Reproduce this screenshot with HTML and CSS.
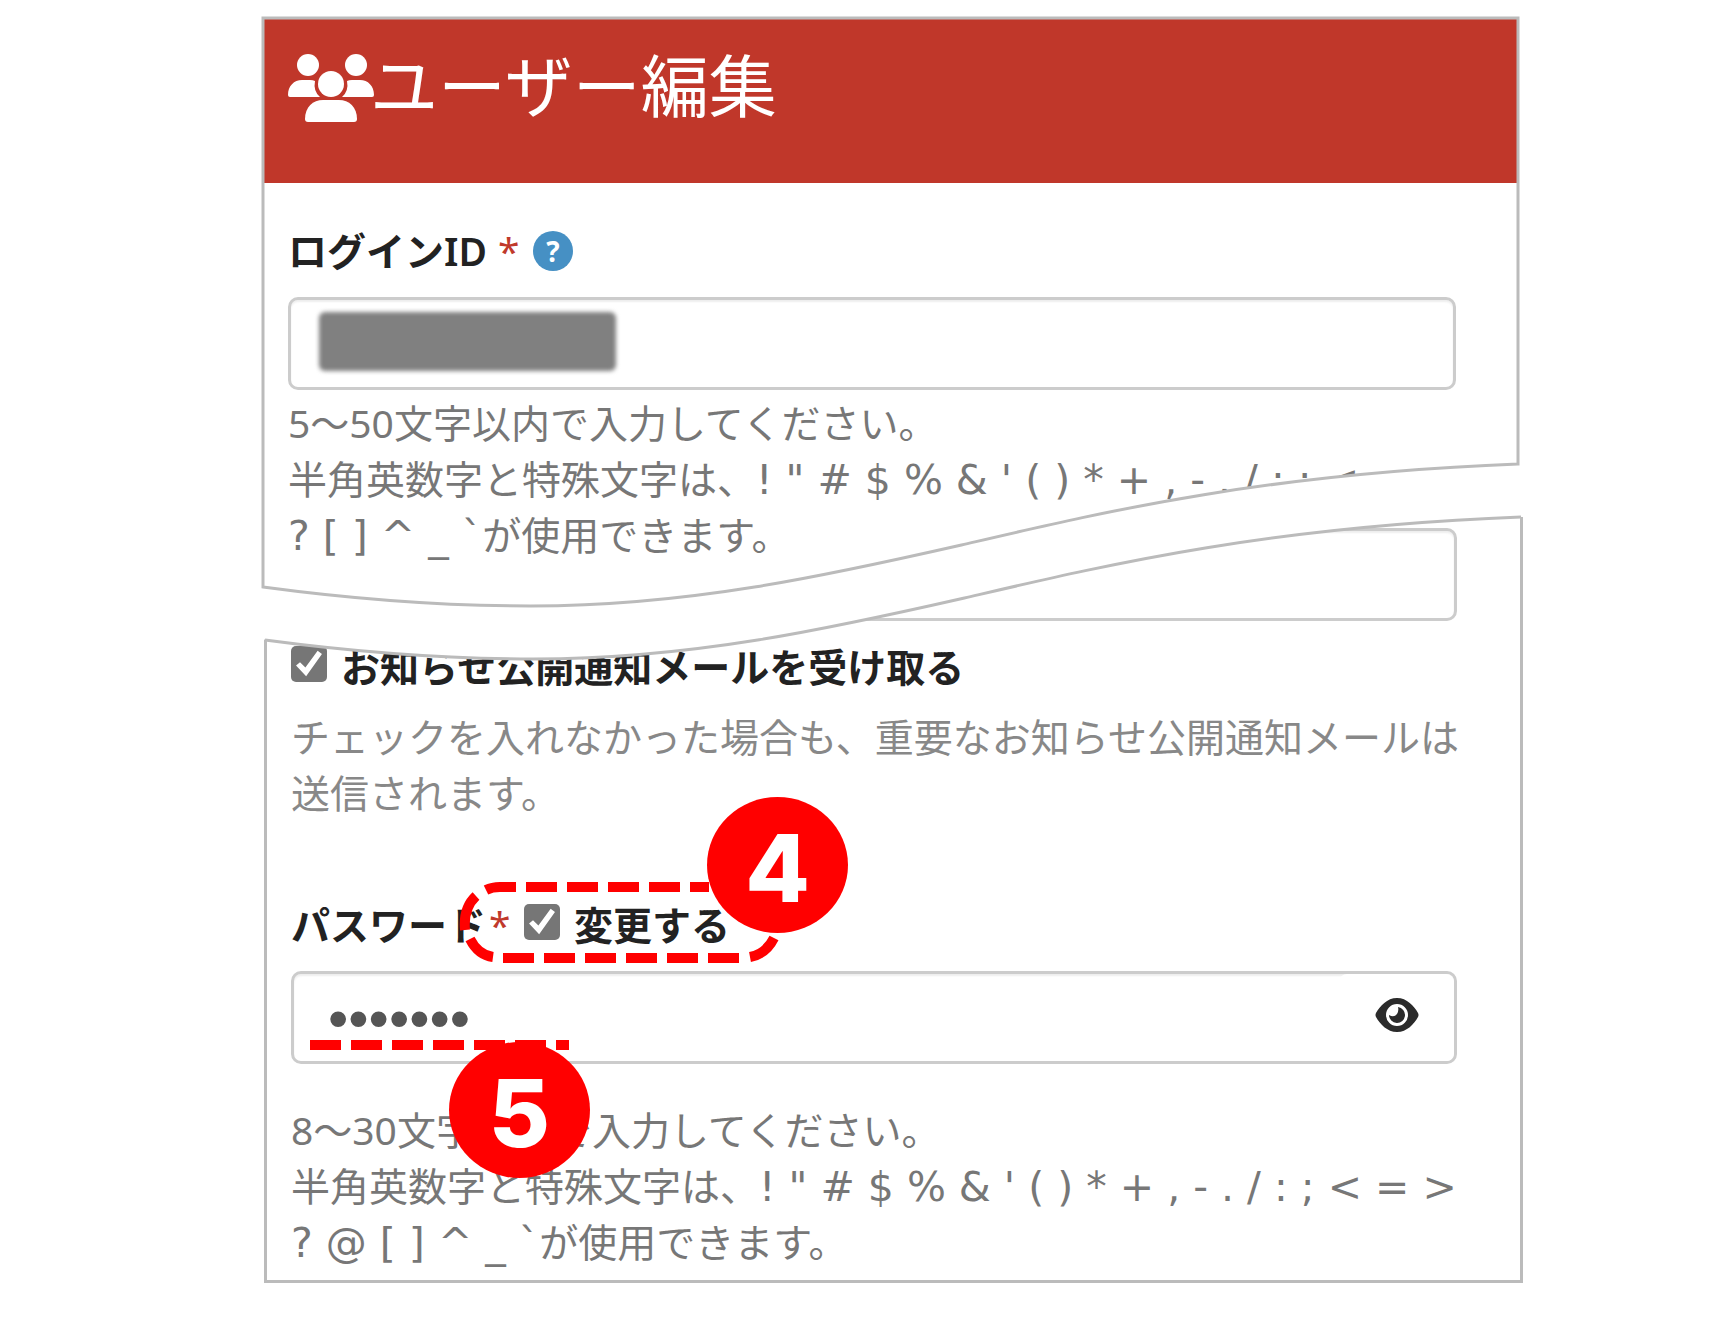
FILE: index.html
```html
<!DOCTYPE html>
<html lang="ja">
<head>
<meta charset="utf-8">
<meta name="viewport" content="width=device-width, initial-scale=1">
<title>ユーザー編集</title>
<link rel="stylesheet" href="styles.css">
</head>
<body>
<main class="figure">
  <section class="sheet sheet-top">
    <svg class="frame frame-back" viewBox="0 0 1260 644" preserveAspectRatio="none" aria-hidden="true">
      <path fill="#fff" d="M0 0H1260V500C1001 510 841 549 703 581C571 611 431 642 272 642C183 642 90 635 0 622Z"/>
    </svg>
    <header class="page-header">
      <svg class="users-icon" viewBox="0 0 86 68" aria-hidden="true">
        <g fill="#fff">
          <circle cx="20" cy="11" r="11"/>
          <circle cx="68" cy="11" r="11"/>
          <circle cx="43" cy="30" r="13"/>
          <path d="M0 41C0 32 6 26 14 26H22Q25 26 27 27Q25 37 32 43H2Q0 43 0 41Z"/>
          <path d="M86 41C86 32 80 26 72 26H64Q61 26 59 27Q61 37 54 43H84Q86 43 86 41Z"/>
          <path d="M17 65C17 53 25 46 35 46H51C61 46 69 53 69 65Q69 68 66 68H20Q17 68 17 65Z"/>
        </g>
      </svg>
      <h1 class="page-title">ユーザー編集</h1>
    </header>
    <div class="fields">
      <div class="row row-login">
        <label class="label" for="login">ログインID</label>
        <span class="required">*</span>
        <button class="help-button" type="button" aria-label="ヘルプ">?</button>
      </div>
      <div class="control">
        <input class="text-box" id="login" type="text">
        <span class="redaction"></span>
      </div>
      <p class="note">5～50文字以内で入力してください。<br>半角英数字と特殊文字は、<span class="symbols">! " # $ % &amp; ' ( ) * + , - . / : ; &lt; = &gt;</span><br><span class="symbols">? [ ] ^ _ `</span>が使用できます。</p>
    </div>
    <svg class="frame" viewBox="0 0 1260 644" preserveAspectRatio="none" aria-hidden="true">
      <path fill="#fff" d="M0 570C90 582 180 589 269 589C428 589 568 558 700 528C838 496 998 457 1260 447V500C1001 510 841 549 703 581C571 611 431 642 272 642C183 642 90 635 0 622Z"/>
      <g class="frame-line">
        <path d="M1 570V1H1257V447C998 457 838 496 700 528C568 558 428 589 269 589C180 589 90 582 1 570Z"/>
        <path d="M3 623C93 635 183 642 272 642C431 642 571 611 703 581C841 549 1001 510 1260 500"/>
      </g>
    </svg>
  </section>

  <section class="sheet sheet-bottom">
    <input class="text-box" type="email" aria-label="メールアドレス">
    <div class="row row-notice">
      <input class="tick" id="notice" type="checkbox" checked>
      <label class="label label-tick" for="notice">お知らせ公開通知メールを受け取る</label>
    </div>
    <p class="note note-notice">チェックを入れなかった場合も、重要なお知らせ公開通知メールは<br>送信されます。</p>
    <div class="row row-password">
      <label class="label" for="password">パスワード</label>
      <span class="required">*</span>
      <input class="tick" id="change" type="checkbox" checked>
      <label class="label label-tick" for="change">変更する</label>
      <svg class="callout callout-change" width="330" height="86" viewBox="0 0 330 86" aria-hidden="true">
        <path class="dashes" d="M67 5H250"/>
        <path class="dashes" d="M44 76H284"/>
        <path d="M57 5H41Q33 5 27 8"/>
        <path d="M17 14Q4 26 6 48"/>
        <path d="M11 57Q19 73 34 75"/>
        <path d="M291 75Q307 72 315 56"/>
      </svg>
      <span class="badge badge-change">4</span>
    </div>
    <div class="control">
      <input class="text-box password-box" id="password" type="password" value="passwor">
      <button class="eye-button" type="button" aria-label="パスワードを表示">
        <svg width="44" height="34" viewBox="0 0 44 34" aria-hidden="true">
          <path fill="#2b2b2b" fill-rule="evenodd" d="M22 0C32 0 39 8 43 15Q44 17 43 19C39 26 32 34 22 34S5 26 1 19Q0 17 1 15C5 8 12 0 22 0ZM22 6A11 11 0 1 0 22 28A11 11 0 1 0 22 6Z"/>
          <path fill="#2b2b2b" d="M23 9A8 8 0 1 1 14 17Q19 20 22 16Q24 13 23 9Z"/>
        </svg>
      </button>
      <svg class="callout callout-password" width="260" height="10" viewBox="0 0 260 10" aria-hidden="true">
        <path class="dashes" d="M0 5H259"/>
      </svg>
      <span class="badge badge-password">5</span>
    </div>
    <p class="note note-password">8～30文字以内で入力してください。<br>半角英数字と特殊文字は、<span class="symbols">! " # $ % &amp; ' ( ) * + , - . / : ; &lt; = &gt;</span><br><span class="symbols">? @ [ ] ^ _ `</span>が使用できます。</p>
  </section>
</main>
</body>
</html>
```
FILE: styles.css
```css
* {
  box-sizing: border-box;
}

body {
  margin: 0;
  background: #fff;
  color: #222;
  font-family: "Noto Sans", "Noto Sans CJK JP", sans-serif;
  font-size: 39px;
  line-height: 56px;
}

.figure {
  display: grid;
  grid-template-columns: 262fr minmax(0, 1259fr) 210fr;
  padding: 17px 0 48px;
}

.sheet {
  grid-column: 2;
  position: relative;
}

/* The upper sheet overlaps the lower one along the torn edge. */
.sheet-top {
  z-index: 1;
  padding: 2px 2px 98px;
}

.sheet-bottom {
  margin: -144px -2px 0 2px;
  padding: 11px 63px 10px 24px;
  border: solid #bbb;
  border-width: 0 3px 3px;
}

.frame {
  position: absolute;
  top: 0;
  left: 0;
  width: 100%;
  height: 100%;
  overflow: visible;
  pointer-events: none;
}

.frame-back {
  z-index: -1;
}

.frame-line {
  fill: none;
  stroke: #bbb;
  stroke-width: 3px;
}

.page-header {
  display: flex;
  align-items: flex-start;
  height: 164px;
  padding: 35px 24px 0;
  background: #c0372a;
  color: #fff;
}

.users-icon {
  width: 86px;
  height: 68px;
  margin-right: -4px;
}

.page-title {
  margin: 0;
  font-family: "Noto Sans CJK JP", sans-serif;
  font-size: 68px;
  font-weight: 400;
  line-height: 58px;
  white-space: nowrap;
}

.fields {
  padding: 40px 63px 0 24px;
}

.row {
  position: relative;
  display: flex;
  align-items: center;
  height: 56px;
  margin-bottom: 18px;
}

.row-notice {
  margin: 18px 0 14px;
}

.label {
  font-weight: 600;
  white-space: nowrap;
}

.label-tick {
  margin-left: 14px;
}

.required {
  width: 38px;
  padding-left: 3px;
  color: #c0392b;
}

.row-login .required {
  margin-left: 8px;
}

.help-button {
  width: 40px;
  height: 40px;
  padding: 0;
  border: 0;
  border-radius: 50%;
  background: #4690c4;
  color: #fff;
  font: 700 28px/40px "Noto Sans", sans-serif;
}

.control {
  position: relative;
}

.text-box {
  display: block;
  width: 100%;
  height: 93px;
  padding: 0 36px;
  border: 3px solid #ccc;
  border-radius: 10px;
  background: #fff;
  box-shadow: inset 0 2px 2px #eee;
  color: #555;
  font: inherit;
}

.redaction {
  position: absolute;
  top: 15px;
  left: 31px;
  width: 297px;
  height: 59px;
  border-radius: 6px;
  background: #808080;
  filter: blur(2px);
}

.note {
  margin: 5px 0 0;
  color: #777;
  white-space: nowrap;
}

.note-notice {
  margin: 0 0 76px;
  color: #888;
}

.note-password {
  margin-top: 38px;
}

.symbols {
  font-family: "DejaVu Sans", sans-serif;
  font-size: 41px;
  line-height: 40px;
}

.tick {
  appearance: none;
  flex: none;
  width: 36px;
  height: 36px;
  margin: 0 0 6px;
  border-radius: 5px;
  background: #767676;
}

.tick::before {
  content: "";
  display: block;
  width: 36px;
  height: 36px;
  background: #fff;
  clip-path: polygon(14% 54%, 25% 45%, 40% 60%, 74% 13%, 86% 22%, 42% 84%);
}

.password-box {
  padding: 0 34px;
  font-family: "Liberation Sans", sans-serif;
  font-size: 58px;
}

.eye-button {
  position: absolute;
  top: 3px;
  right: 3px;
  width: 115px;
  height: 87px;
  padding: 0 0 6px;
  border: 0;
  border-radius: 8px;
  background: #fff;
  line-height: 0;
}

.callout {
  position: absolute;
  fill: none;
  stroke: #f00;
  stroke-width: 10px;
}

.dashes {
  stroke-dasharray: 31 10;
}

.callout-change {
  top: -15px;
  left: 168px;
}

.callout-password {
  top: 69px;
  left: 19px;
}

.badge {
  position: absolute;
  width: 141px;
  height: 136px;
  border-radius: 50%;
  background: #f00;
  color: #fff;
  font: 800 94px/142px Inter, sans-serif;
  text-align: center;
}

.badge-change {
  top: -100px;
  left: 416px;
}

.badge-password {
  top: 71px;
  left: 158px;
}
```
